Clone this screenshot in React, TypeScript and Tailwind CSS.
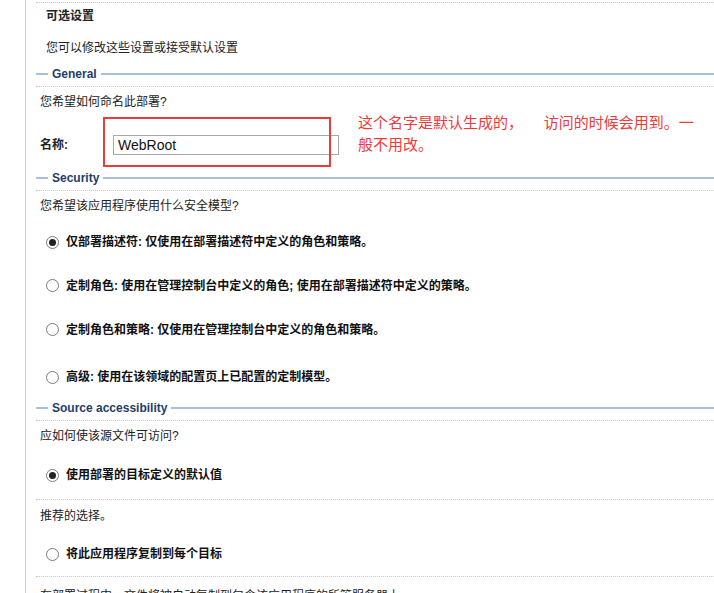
const font = { fontFamily: '"Liberation Sans", "Noto Sans CJK SC", sans-serif' };

function Header({ title }: { title: string }) {
  return (
    <div className="h-[10px] flex items-center relative">
      <div className="w-[12px] h-[2px] bg-[#a9c0da]" />
      <div className="px-[4px] text-[12px] font-bold text-[#1f3d6b] leading-none">{title}</div>
      <div className="flex-1 h-[2px] bg-[#a9c0da]" />
    </div>
  );
}
const Dots = () => <div className="border-t border-dotted border-[#c8c8c8]" />;

function Radio({ checked, label, h }: { checked?: boolean; label: string; h: string }) {
  return (
    <div className={`flex items-center pl-[10px] ${h}`}>
      <span className="w-[13px] h-[13px] rounded-full border border-[#7a7a7a] bg-white flex items-center justify-center">
        {checked && <span className="w-[7px] h-[7px] rounded-full bg-[#222]" />}
      </span>
      <span className="ml-[7px] text-[12px] font-bold text-[#111]">{label}</span>
    </div>
  );
}

export default function App() {
  return (
    <div className="w-[714px] h-[593px] overflow-hidden bg-white relative text-[#222]" style={font}>
      <div className="absolute left-[25px] top-0 bottom-0 w-px bg-[#d0d0d0]" />
      <div className="ml-[36px] pt-[2px]">
        <Dots />
        <div className="h-[26px] flex items-center pl-[10px] text-[12px] font-bold">可选设置</div>
        <div className="h-[38px] flex items-center pl-[10px] text-[12px]">您可以修改这些设置或接受默认设置</div>
        <div className="pt-[2px]"><Header title="General" /></div>
        <div className="h-[7px]" />
        <Dots />
        <div className="h-[30px] flex items-center pl-[4px] text-[12px]">您希望如何命名此部署?</div>
        <div className="h-[56px] flex items-center pl-[4px] relative">
          <span className="w-[73px] text-[12px] font-bold">名称:</span>
          <div className="w-[226px] h-[20px] border border-[#aaa] flex items-center px-[4px] text-[14px] text-[#111]">WebRoot</div>
          <div className="absolute left-[67px] top-[0px] w-[228px] h-[50px] border-2 border-[#f03a3a]" />
          <div className="absolute left-[322px] top-[-5px] w-[380px] text-[15px] leading-[22px] text-[#f03a3a] whitespace-nowrap">
            这个名字是默认生成的，&nbsp;&nbsp;&nbsp;&nbsp;&nbsp;访问的时候会用到。一<br />般不用改。
          </div>
        </div>
        <Header title="Security" />
        <div className="h-[7px]" />
        <Dots />
        <div className="h-[30px] flex items-center pl-[4px] text-[12px]">您希望该应用程序使用什么安全模型?</div>
        <Radio h="h-[42px]" checked label="仅部署描述符: 仅使用在部署描述符中定义的角色和策略。" />
        <Radio h="h-[45px]" label="定制角色: 使用在管理控制台中定义的角色; 使用在部署描述符中定义的策略。" />
        <Radio h="h-[43px]" label="定制角色和策略: 仅使用在管理控制台中定义的角色和策略。" />
        <Radio h="h-[52px]" label="高级: 使用在该领域的配置页上已配置的定制模型。" />
        <Header title="Source accessibility" />
        <div className="h-[7px]" />
        <Dots />
        <div className="h-[30px] flex items-center pl-[4px] text-[12px]">应如何使该源文件可访问?</div>
        <Radio h="h-[48px]" checked label="使用部署的目标定义的默认值" />
        <Dots />
        <div className="h-[32px] flex items-center pl-[4px] text-[12px]">推荐的选择。</div>
        <Radio h="h-[44px]" label="将此应用程序复制到每个目标" />
        <Dots />
        <div className="h-[26px] flex items-center pl-[4px] text-[12px] pt-[12px]">在部署过程中，文件将被自动复制到包含该应用程序的所管服务器上。</div>
      </div>
    </div>
  );
}
